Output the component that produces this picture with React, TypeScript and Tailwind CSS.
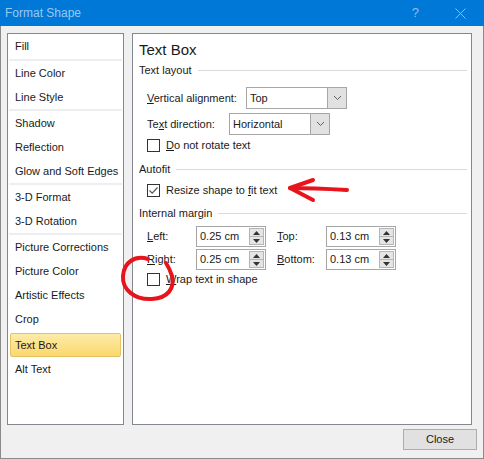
import React from "react"

type NavEntry = { label: string; kind?: "sep" | "gap"; h?: number; active?: boolean }

const navItems: NavEntry[] = [
  { label: "Fill", h: 25 },
  { label: "", kind: "sep" },
  { label: "Line Color" },
  { label: "Line Style" },
  { label: "", kind: "sep" },
  { label: "Shadow" },
  { label: "Reflection" },
  { label: "Glow and Soft Edges" },
  { label: "", kind: "sep" },
  { label: "3-D Format" },
  { label: "3-D Rotation" },
  { label: "", kind: "sep" },
  { label: "Picture Corrections" },
  { label: "Picture Color" },
  { label: "Artistic Effects" },
  { label: "Crop" },
  { label: "", kind: "gap" },
  { label: "Text Box", active: true },
  { label: "Alt Text" },
]

function Checkbox({ checked }: { checked?: boolean }) {
  return (
    <span className="flex h-[13px] w-[13px] shrink-0 items-center justify-center border border-[#333333] bg-white">
      {checked && (
        <svg width="11" height="11" viewBox="0 0 11 11">
          <path d="M1.5 5.5 L4.2 8.2 L9.5 2.5" fill="none" stroke="#555555" strokeWidth="1.2" />
        </svg>
      )}
    </span>
  )
}

function Chevron() {
  return (
    <svg width="9" height="6" viewBox="0 0 9 6">
      <path d="M1 1 L4.5 4.5 L8 1" fill="none" stroke="#606060" strokeWidth="1" />
    </svg>
  )
}

function Dropdown({ value }: { value: string }) {
  return (
    <div className="flex h-[22px] w-[101px] border border-[#a6a6a6] bg-white">
      <span className="flex flex-1 items-center pl-[3px]">{value}</span>
      <span className="flex w-[19px] items-center justify-center border-l border-[#a6a6a6] bg-[#e1e1e1]">
        <Chevron />
      </span>
    </div>
  )
}

function Spinner({ value }: { value: string }) {
  return (
    <div className="flex h-[21px] w-[70px] border border-[#a6a6a6] bg-white">
      <span className="flex flex-1 items-center pl-[3px]">{value}</span>
      <span className="my-[1px] mr-[1px] flex w-[15px] flex-col border border-[#b5b5b5] bg-[#e5e5e5]">
        <span className="flex flex-1 items-center justify-center border-b border-[#b5b5b5]">
          <svg width="7" height="4" viewBox="0 0 7 4">
            <path d="M0 4 L3.5 0 L7 4 Z" fill="#333333" />
          </svg>
        </span>
        <span className="flex flex-1 items-center justify-center">
          <svg width="7" height="4" viewBox="0 0 7 4">
            <path d="M0 0 L3.5 4 L7 0 Z" fill="#333333" />
          </svg>
        </span>
      </span>
    </div>
  )
}

function SectionTitle({ text, className }: { text: string; className: string }) {
  return (
    <div className={`flex h-[16px] items-center pr-[4px] ${className}`}>
      <span>{text}</span>
      <span className="ml-[6px] h-px flex-1 bg-[#dadada]" />
    </div>
  )
}

export default function App() {
  return (
    <div className="relative flex h-[459px] w-[484px] flex-col border-x border-b border-[#8a8a8a] bg-[#f0f0f0] font-['Liberation_Sans',Arial,sans-serif] text-[11px] text-[#1a1a1a]">
      {/* Title bar */}
      <div className="-mx-px flex h-[26px] shrink-0 items-center bg-[#0078d7] pl-[5px] text-[12px] text-[#99c8ee]">
        <span className="flex-1">Format Shape</span>
        <span className="mr-[36px] text-[13px] text-[#8fbfe8]">?</span>
        <svg width="11" height="11" viewBox="0 0 11 11" className="mr-[18px]">
          <path d="M0.5 0.5 L10.5 10.5 M10.5 0.5 L0.5 10.5" stroke="#8fbfe8" strokeWidth="1" />
        </svg>
      </div>

      <div className="flex flex-col pt-[7px]">
        <div className="flex h-[392px] gap-[8px] pl-[6px]">
          {/* Category list */}
          <div className="flex w-[117px] flex-col border border-[#828790] bg-white">
            {navItems.map((item, i) => {
              if (item.kind === "sep") return <div key={i} className="mx-px h-[2px] bg-[#eceef1]" />
              if (item.kind === "gap") return <div key={i} className="h-[2px]" />
              if (item.active)
                return (
                  <div
                    key={i}
                    className="mx-[2px] flex h-[24px] items-center rounded-[2px] border border-[#e5c365] bg-gradient-to-b from-[#fdeba8] to-[#fbd86c] pl-[4px]"
                  >
                    {item.label}
                  </div>
                )
              return (
                <div key={i} className={`flex items-center pl-[7px] ${item.h === 25 ? "h-[25px]" : "h-[24px]"}`}>
                  {item.label}
                </div>
              )
            })}
          </div>

          {/* Settings */}
          <div className="flex w-[340px] flex-col border border-[#828790] bg-white pl-[6px]">
            <div className="mt-[6px] flex h-[20px] items-center text-[15px]">Text Box</div>
            <SectionTitle text="Text layout" className="mt-[2px]" />

            <div className="mt-[9px] flex items-center pl-[8px]">
              <span className="w-[99px]">
                <u>V</u>ertical alignment:
              </span>
              <Dropdown value="Top" />
            </div>
            <div className="mt-[4px] flex items-center pl-[8px]">
              <span className="w-[82px]">
                Te<u>x</u>t direction:
              </span>
              <Dropdown value="Horizontal" />
            </div>
            <div className="mt-[2px] flex h-[16px] items-center gap-[6px] pl-[8px]">
              <Checkbox />
              <span>
                <u>D</u>o not rotate text
              </span>
            </div>

            <SectionTitle text="Autofit" className="mt-[8px]" />
            <div className="mt-[5px] flex h-[16px] items-center gap-[6px] pl-[8px]">
              <Checkbox checked />
              <span>
                Resize shape to <u>f</u>it text
              </span>
            </div>

            <SectionTitle text="Internal margin" className="mt-[7px]" />
            <div className="mt-[5px] flex items-center pl-[8px]">
              <span className="w-[49px]">
                <u>L</u>eft:
              </span>
              <Spinner value="0.25 cm" />
              <span className="ml-[11px] w-[49px]">
                <u>T</u>op:
              </span>
              <Spinner value="0.13 cm" />
            </div>
            <div className="mt-[2px] flex items-center pl-[8px]">
              <span className="w-[49px]">
                <u>R</u>ight:
              </span>
              <Spinner value="0.25 cm" />
              <span className="ml-[11px] w-[49px]">
                <u>B</u>ottom:
              </span>
              <Spinner value="0.13 cm" />
            </div>
            <div className="mt-[1px] flex h-[16px] items-center gap-[6px] pl-[8px]">
              <Checkbox />
              <span>
                <u>W</u>rap text in shape
              </span>
            </div>
          </div>
        </div>

        <div className="mt-[4px] flex justify-end pr-[6px]">
          <button className="flex h-[21px] w-[74px] items-center justify-center border border-[#adadad] bg-[#e1e1e1]">
            Close
          </button>
        </div>
      </div>

      {/* Red pen annotations */}
      <svg width="484" height="459" viewBox="0 0 484 459" className="pointer-events-none absolute left-[-1px] top-0">
        <g fill="none" stroke="#e8141c" strokeWidth="4" strokeLinecap="round" strokeLinejoin="round">
          <path d="M347 190 C330 189, 310 188, 290 188" />
          <path d="M313 180 L290 188 L313 200" />
          <path d="M148 259 C135 255, 124 262, 123 276 C122 290, 135 300, 152 299 C168 298, 175 288, 172 276 C170 270, 168 266, 166 263" />
        </g>
      </svg>
    </div>
  )
}
